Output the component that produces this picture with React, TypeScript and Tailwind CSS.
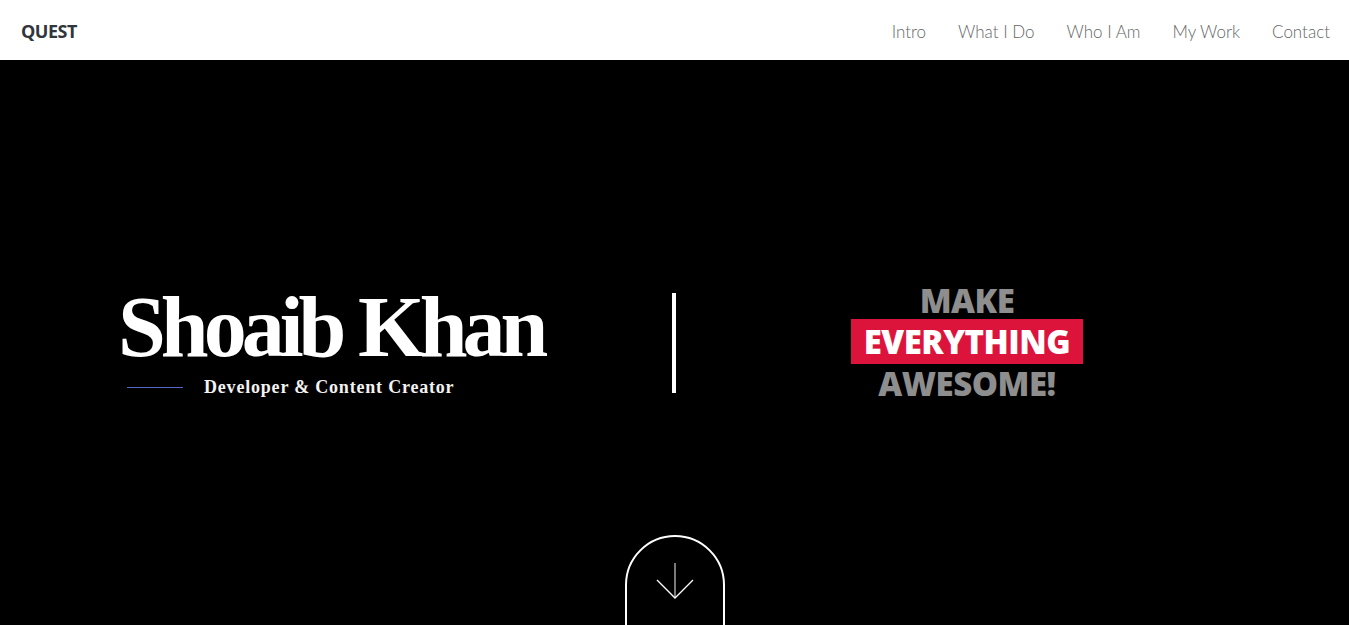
const navItems = ["Intro", "What I Do", "Who I Am", "My Work", "Contact"];

export default function App() {
  return (
    <div className="min-h-screen bg-black">
      {/* header */}
      <header className="h-[60px] bg-white flex items-center justify-between pl-[21px] pr-[19px] pt-[3px]">
        <div className="font-['Open_Sans',sans-serif] font-bold text-[18px] tracking-[-0.5px] text-[#30363b]">
          QUEST
        </div>
        <nav className="flex items-center gap-[32px] font-['Lato',sans-serif] font-light text-[17px] text-[#666]">
          {navItems.map((item) => (
            <a key={item} href="#" className="hover:text-black">
              {item}
            </a>
          ))}
        </nav>
      </header>

      {/* hero */}
      <section className="relative h-[565px] overflow-hidden flex items-center">
        <div className="flex items-center w-full pl-[118px]">
          <div className="w-[554px] flex flex-col">
            <h1 className="font-['Liberation_Serif',serif] font-bold text-[86px] leading-[86px] tracking-[-5px] text-white">
              Shoaib Khan
            </h1>
            <div className="flex items-center mt-[4px] pl-[9px]">
              <span className="w-[56px] h-px bg-[#5566c8]"></span>
              <span className="ml-[21px] font-['Liberation_Serif',serif] font-bold text-[18px] tracking-[0.8px] text-[#f2f2f2]">
                Developer &amp; Content Creator
              </span>
            </div>
          </div>
          <div className="w-[4px] h-[100px] bg-white"></div>
          <div className="w-[582px] flex flex-col items-center font-['Open_Sans',sans-serif] font-extrabold text-[33px] leading-[36px] tracking-[-0.5px]">
            <span className="text-[#8e8e8e]">MAKE</span>
            <span className="bg-[#dc143c] text-white px-[13px] h-[45px] flex items-center">EVERYTHING</span>
            <span className="text-[#8e8e8e] mt-[2px]">AWESOME!</span>
          </div>
        </div>

        {/* scroll button */}
        <a
          href="#"
          className="absolute left-[625px] top-[475px] w-[100px] h-[140px] rounded-t-full border-2 border-white flex justify-center pt-[26px]"
        >
          <svg width="40" height="38" viewBox="0 0 40 38" fill="none" stroke="#fff" strokeWidth="1.3">
            <line x1="20" y1="0" x2="20" y2="35" stroke="#bbb" />
            <polyline points="2,17 20,35 38,17" />
          </svg>
        </a>
      </section>
    </div>
  );
}
